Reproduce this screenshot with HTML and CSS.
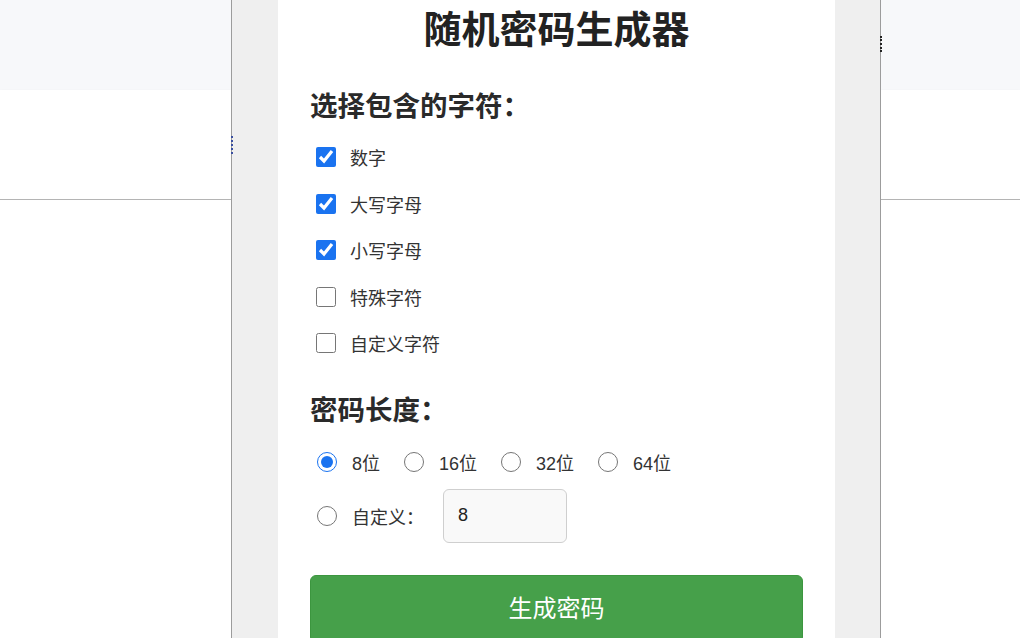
FILE: index.html
```html
<!DOCTYPE html>
<html lang="zh-CN">
<head>
<meta charset="utf-8">
<title>随机密码生成器</title>
<link rel="stylesheet" href="styles.css">
</head>
<body>
<div class="page">
  <div class="page-header"></div>
  <div class="page-band"></div>
  <div class="page-rest"></div>
</div>

<div class="panel">
  <span class="mark mark-blue"></span>
  <span class="mark mark-dark"></span>
  <div class="card">
    <h1 class="title">随机密码生成器</h1>

    <h2 class="section-title">选择包含的字符：</h2>
    <div class="options">
      <label class="check-row"><input type="checkbox" checked><span>数字</span></label>
      <label class="check-row"><input type="checkbox" checked><span>大写字母</span></label>
      <label class="check-row"><input type="checkbox" checked><span>小写字母</span></label>
      <label class="check-row"><input type="checkbox"><span>特殊字符</span></label>
      <label class="check-row"><input type="checkbox"><span>自定义字符</span></label>
    </div>

    <h2 class="section-title length-title">密码长度：</h2>
    <div class="radio-row">
      <label class="radio"><input type="radio" name="len" checked><span>8位</span></label>
      <label class="radio"><input type="radio" name="len"><span>16位</span></label>
      <label class="radio"><input type="radio" name="len"><span>32位</span></label>
      <label class="radio"><input type="radio" name="len"><span>64位</span></label>
    </div>
    <div class="radio-row custom-row">
      <label class="radio"><input type="radio" name="len"><span>自定义：</span></label>
      <input class="len-input" type="text" value="8">
    </div>

    <button class="generate" type="button">生成密码</button>
  </div>
</div>
</body>
</html>
```
FILE: styles.css
```css
html, body {
  margin: 0;
  padding: 0;
  height: 100%;
  overflow: hidden;
  background: #ffffff;
  font-family: "Liberation Sans", "Noto Sans CJK SC", sans-serif;
  color: #222;
}

.page {
  display: flex;
  flex-direction: column;
  height: 100%;
}

.page-header {
  height: 90px;
  background: #f7f8fa;
}

.page-band {
  height: 109px;
  background: #ffffff;
  border-bottom: 1px solid #b4b4b4;
  box-shadow: 0 2px 4px rgba(0, 0, 0, 0.08);
}

.page-rest {
  flex: 1;
  background: #ffffff;
}

.panel {
  position: absolute;
  top: 0;
  left: 231px;
  width: 648px;
  height: 100%;
  background: #efefef;
  border-left: 1px solid #9c9c9c;
  border-right: 1px solid #9c9c9c;
}

.mark {
  position: absolute;
  width: 0;
  height: 18px;
}

.mark-blue {
  left: -1px;
  top: 136px;
  border-left: 2px dotted #3a4fa0;
}

.mark-dark {
  right: -2px;
  top: 36px;
  height: 16px;
  border-left: 2px dotted #222;
}

.card {
  margin-left: 46px;
  width: 557px;
  height: 100%;
  box-sizing: border-box;
  background: #ffffff;
  padding: 7px 32px 0;
}

.title {
  margin: 0;
  font-size: 38px;
  line-height: 46px;
  font-weight: bold;
  text-align: center;
  color: #222;
}

.section-title {
  margin: 37px 0 0;
  font-size: 27.5px;
  line-height: 34px;
  font-weight: bold;
  color: #2a2a2a;
}

.options {
  margin-top: 10px;
  display: flex;
  flex-direction: column;
}

.check-row {
  display: flex;
  align-items: center;
  height: 46.5px;
  font-size: 18px;
  color: #333;
}

.check-row input {
  width: 20px;
  height: 20px;
  margin: 0 14px 0 6px;
  accent-color: #1a73f0;
}

.length-title {
  margin-top: 27px;
}

.radio-row {
  display: flex;
  align-items: center;
  gap: 17px;
  height: 40px;
  margin-top: 14px;
}

.radio {
  display: flex;
  align-items: center;
  font-size: 18px;
  color: #333;
}

.radio input {
  width: 20px;
  height: 20px;
  margin: 0 15px 0 7px;
  accent-color: #1a73f0;
}

.custom-row {
  height: 54px;
  margin-top: 7px;
  gap: 19px;
}

.len-input {
  width: 124px;
  height: 54px;
  box-sizing: border-box;
  border: 1px solid #cfcfcf;
  border-radius: 6px;
  background: #f9f9f9;
  padding: 0 14px;
  font-family: "Liberation Sans", sans-serif;
  font-size: 18px;
  color: #222;
}

.generate {
  display: block;
  width: 100%;
  height: 68px;
  margin-top: 32px;
  border: 1px solid #3c963f;
  border-radius: 6px;
  background: #46a04a;
  color: #ffffff;
  font-family: "Liberation Sans", "Noto Sans CJK SC", sans-serif;
  font-size: 24px;
  padding: 0 0 4px;
}
```
